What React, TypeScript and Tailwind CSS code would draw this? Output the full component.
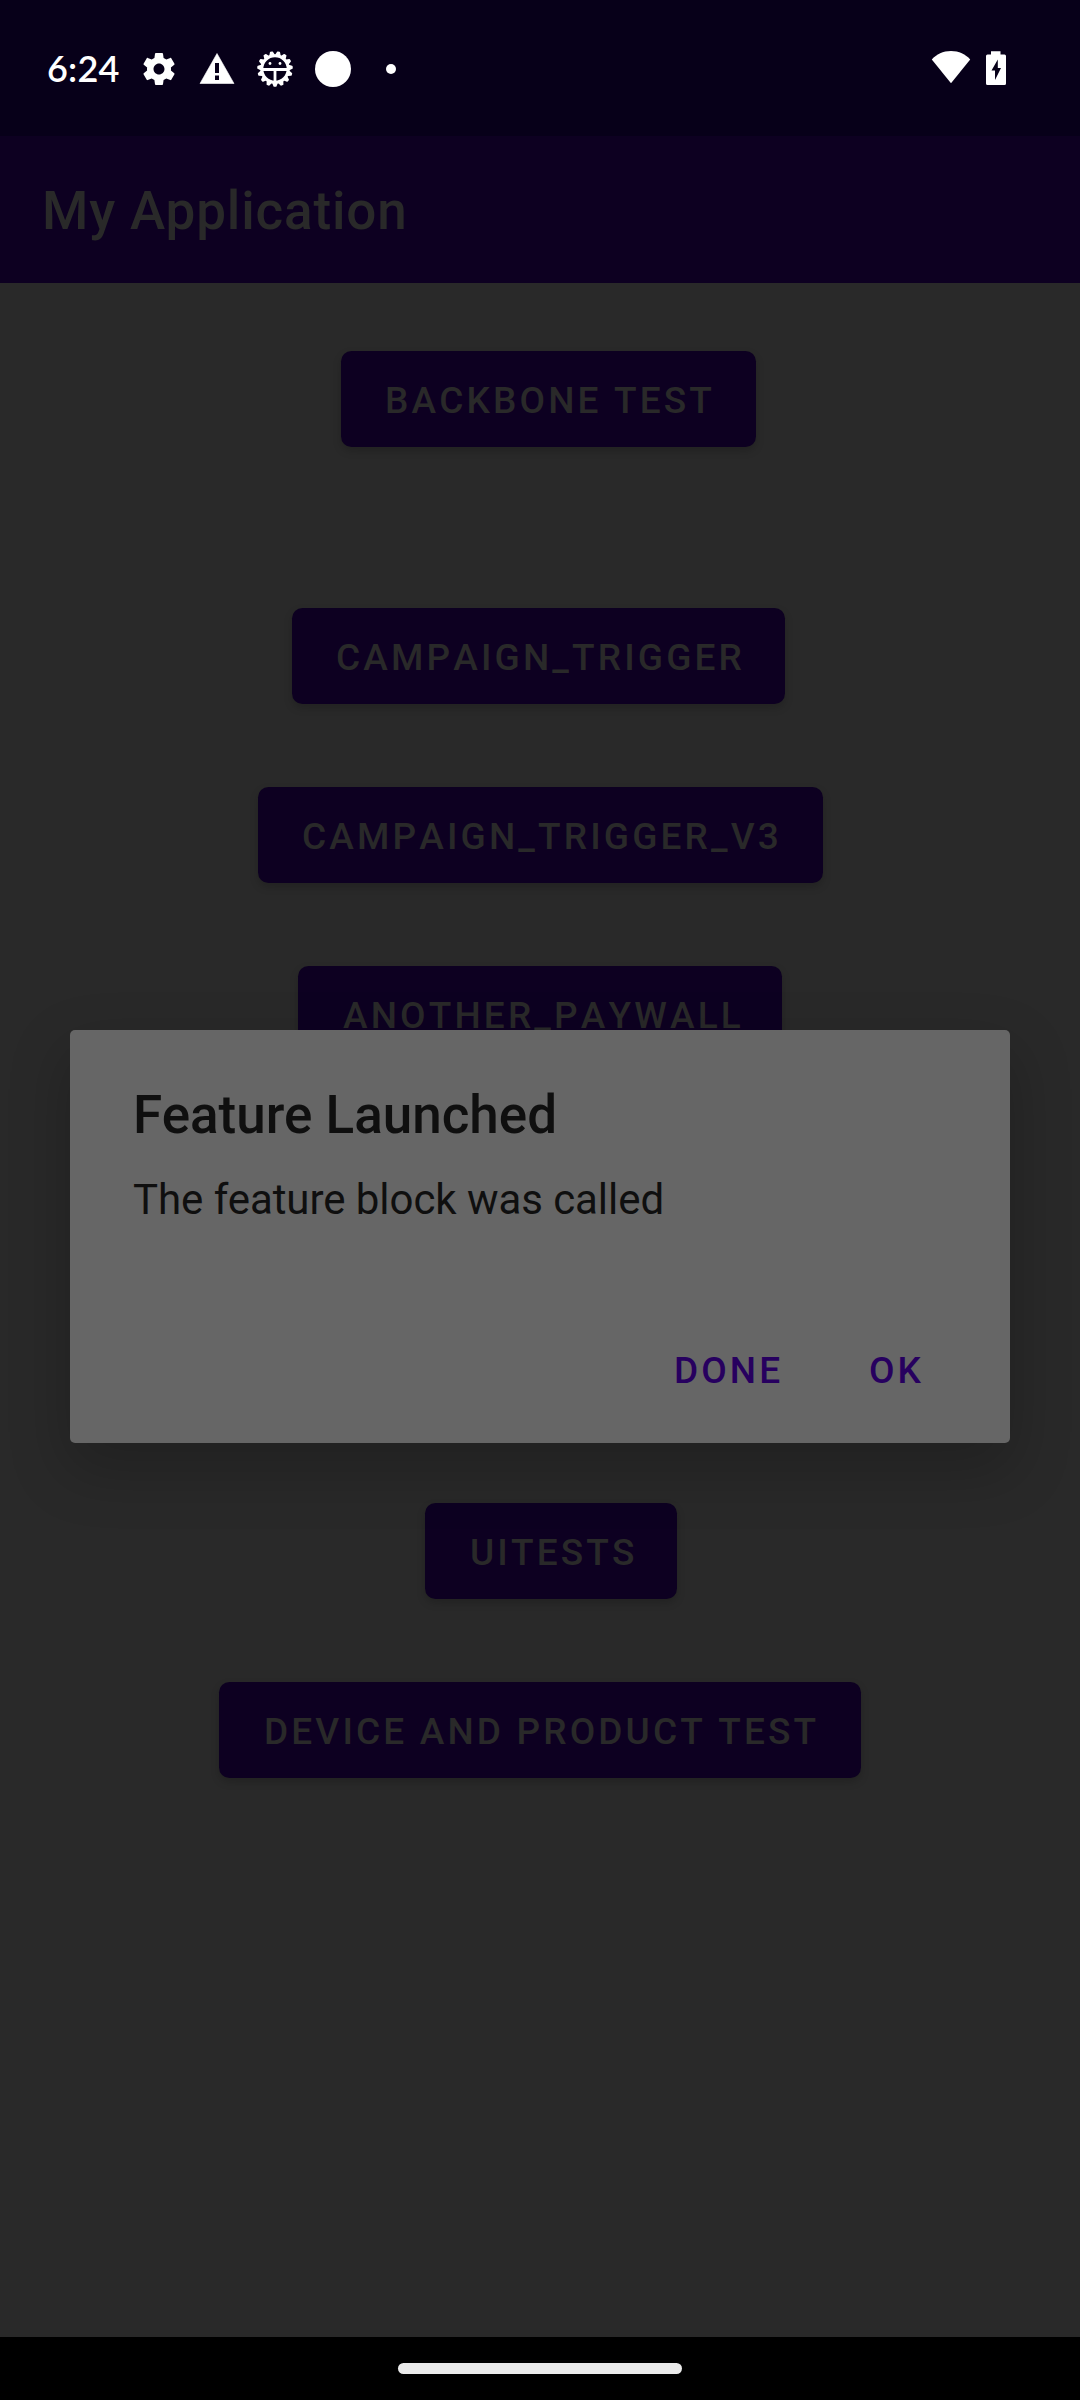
type TestButton = { label: string; box: string };

const BUTTONS: TestButton[] = [
  { label: 'BACKBONE TEST', box: 'ml-[341px] w-[415px] mb-[161px] pl-[44px]' },
  { label: 'CAMPAIGN_TRIGGER', box: 'ml-[292px] w-[493px] mb-[83px] pl-[44px]' },
  { label: 'CAMPAIGN_TRIGGER_V3', box: 'ml-[258px] w-[565px] mb-[83px] pl-[44px]' },
  { label: 'ANOTHER_PAYWALL', box: 'ml-[298px] w-[484px] mb-[441px] pl-[45px]' },
  { label: 'UITESTS', box: 'ml-[425px] w-[252px] mb-[83px] pl-[45px]' },
  { label: 'DEVICE AND PRODUCT TEST', box: 'ml-[219px] w-[642px] pl-[45px]' },
];

const TEETH = Array.from({ length: 15 }, (_, i) => i * 24);

function GearIcon() {
  return (
    <svg className="ml-[20px] h-[40px] w-[40px]" viewBox="0 0 24 24" fill="#fff">
      <path d="M19.14 12.94c.04-.3.06-.61.06-.94 0-.32-.02-.64-.07-.94l2.03-1.58c.18-.14.23-.41.12-.61l-1.92-3.32c-.12-.22-.37-.29-.59-.22l-2.39.96c-.5-.38-1.03-.7-1.62-.94l-.36-2.54c-.04-.24-.24-.41-.48-.41h-3.84c-.24 0-.43.17-.47.41l-.36 2.54c-.59.24-1.13.57-1.62.94l-2.39-.96c-.22-.08-.47 0-.59.22L2.74 8.87c-.12.21-.08.47.12.61l2.03 1.58c-.05.3-.09.63-.09.94s.02.64.07.94l-2.03 1.58c-.18.14-.23.41-.12.61l1.92 3.32c.12.22.37.29.59.22l2.39-.96c.5.38 1.03.7 1.62.94l.36 2.54c.05.24.24.41.48.41h3.84c.24 0 .44-.17.47-.41l.36-2.54c.59-.24 1.13-.56 1.62-.94l2.39.96c.22.08.47 0 .59-.22l1.92-3.32c.12-.22.07-.47-.12-.61l-2.01-1.58zM12 15.3c-1.8 0-3.3-1.5-3.3-3.3s1.5-3.3 3.3-3.3 3.3 1.5 3.3 3.3-1.5 3.3-3.3 3.3z" />
    </svg>
  );
}

function WarningIcon() {
  return (
    <svg className="ml-[20px] h-[36px] w-[36px]" viewBox="0 0 36 36">
      <path d="M18 2.500 35 32.500H1z" fill="#fff" stroke="#fff" strokeWidth="0.6" strokeLinejoin="round" />
      <path d="M16 12h4v10h-4zM16 24.500h4v4.500h-4z" fill="#070019" />
    </svg>
  );
}

function BugGearIcon() {
  return (
    <svg className="ml-[20px] h-[40px] w-[40px]" viewBox="-20 -20 40 40" stroke="#fff">
      {TEETH.map((angle) => (
        <path key={angle} d="M-2 14 -0.800 17H0.800L2 14z" fill="#fff" strokeWidth="1.600" strokeLinejoin="round" transform={`rotate(${angle})`} />
      ))}
      <circle r="13.200" fill="none" strokeWidth="3" />
      <path d="M-13 0.500H13M0 0.500V13" strokeWidth="2.800" />
      <circle cx="-5" cy="-5.500" r="1.400" fill="#fff" stroke="none" />
      <circle cx="5" cy="-5.500" r="1.400" fill="#fff" stroke="none" />
    </svg>
  );
}

function WifiIcon() {
  return (
    <svg className="h-[34px] w-[40px]" viewBox="0 0 40 34" fill="#fff">
      <path d="M20 33.200 0.800 9.600C5.500 4 12 1 20 1s14.500 3 19.200 8.600z" />
    </svg>
  );
}

function BatteryIcon() {
  return (
    <svg className="mt-[1px] ml-[15px] h-[34px] w-[20px]" viewBox="0 0 20 34">
      <path d="M5 0.300h9.500V3.500H18.500Q20 3.500 20 5V32.500Q20 34 18.500 34H1.500Q0 34 0 32.500V5Q0 3.500 1.500 3.500H5z" fill="#fff" />
      <path d="M11.800 8.500 5.500 19.600H9V29L15 17H11.800z" fill="#070019" />
    </svg>
  );
}

function StatusBar() {
  return (
    <div className="flex h-[136px] items-start bg-[#070019] pt-[49px]">
      <div className="flex h-[40px] flex-1 items-center">
        <span className="-mt-[2px] ml-[47px] w-[72px] whitespace-nowrap font-['Lato'] text-[36px] leading-[40px] font-semibold tracking-[0.2px] text-white">6:24</span>
        <GearIcon />
        <WarningIcon />
        <BugGearIcon />
        <span className="ml-[20px] h-[36px] w-[36px] rounded-full bg-white" />
        <span className="ml-[35px] h-[10px] w-[10px] rounded-full bg-white" />
      </div>
      <div className="flex pt-[1px] pr-[74px]">
        <WifiIcon />
        <BatteryIcon />
      </div>
    </div>
  );
}

function Dialog() {
  return (
    <div className="absolute top-[1030px] left-[70px] flex h-[413px] w-[940px] flex-col rounded-[5px] bg-[#666666] shadow-[0_24px_60px_4px_rgba(0,0,0,0.2)]">
      <h2 className="mt-[54px] ml-[63px] text-[53px] leading-[62px] font-medium text-[#0f0f0f]">Feature Launched</h2>
      <p className="mt-[29px] ml-[63px] text-[42px] leading-[50px] tracking-[-0.06px] text-[#0f0f0f]">The feature block was called</p>
      <div className="mt-[124px] flex text-[37px] leading-[44px] font-medium tracking-[3.100px] text-[#27005f]">
        <button className="ml-[604px] w-[195px] text-left">DONE</button>
        <button className="text-left">OK</button>
      </div>
    </div>
  );
}

export default function App() {
  return (
    <div className="relative flex h-[2400px] w-[1080px] flex-col overflow-hidden bg-[#292929] font-['Roboto',sans-serif]">
      <StatusBar />
      <header className="flex h-[147px] items-center bg-[#0d0021] pt-[3px] pl-[42px]">
        <h1 className="text-[53px] leading-[62px] font-medium tracking-[0.85px] text-[#292929]">My Application</h1>
      </header>
      <main className="flex flex-1 flex-col items-start pt-[68px]">
        {BUTTONS.map(({ label, box }) => (
          <button
            key={label}
            className={`${box} h-[96px] shrink-0 rounded-[10.5px] bg-[#0d0021] pt-[3px] text-left text-[37px] leading-[44px] font-medium tracking-[3.150px] whitespace-nowrap text-[#292929] shadow-[0_4px_8px_rgba(0,0,0,0.18)] [font-kerning:none]`}
          >
            {label}
          </button>
        ))}
      </main>
      <footer className="flex h-[63px] items-center justify-center bg-black">
        <span className="h-[11px] w-[284px] rounded-full bg-[#ebebeb]" />
      </footer>
      <Dialog />
    </div>
  );
}
